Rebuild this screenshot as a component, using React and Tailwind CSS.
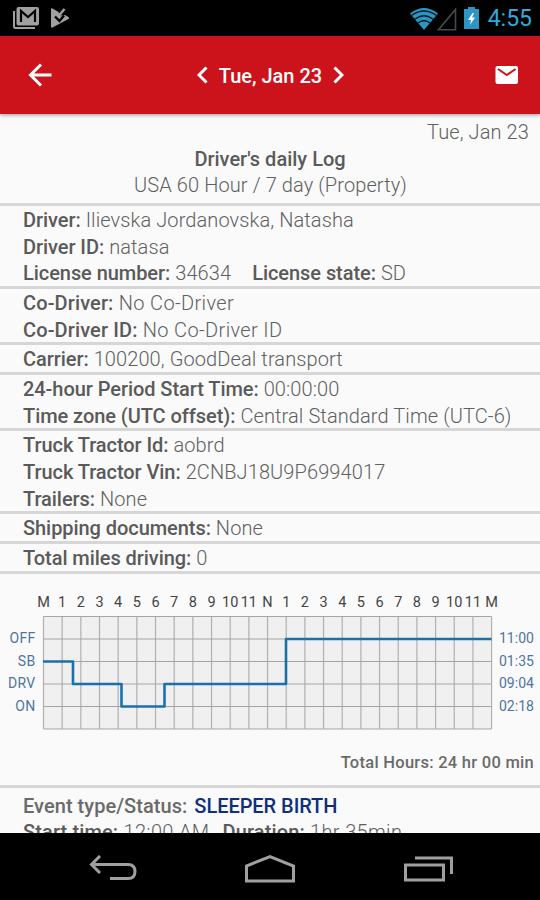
import React, { useState } from "react";

const HOURS = ["M", "1", "2", "3", "4", "5", "6", "7", "8", "9", "10", "11", "N", "1", "2", "3", "4", "5", "6", "7", "8", "9", "10", "11", "M"];

const STATUSES = [
  { name: "OFF", total: "11:00" },
  { name: "SB", total: "01:35" },
  { name: "DRV", total: "09:04" },
  { name: "ON", total: "02:18" },
];

const SECTIONS = [
  [
    [{ label: "Driver:", value: "Ilievska Jordanovska, Natasha" }],
    [{ label: "Driver ID:", value: "natasa" }],
    [
      { label: "License number:", value: "34634" },
      { label: "License state:", value: "SD" },
    ],
  ],
  [
    [{ label: "Co-Driver:", value: "No Co-Driver", wide: true }],
    [{ label: "Co-Driver ID:", value: "No Co-Driver ID", wide: true }],
  ],
  [[{ label: "Carrier:", value: "100200, GoodDeal transport" }]],
  [
    [{ label: "24-hour Period Start Time:", value: "00:00:00" }],
    [{ label: "Time zone (UTC offset):", value: "Central Standard Time (UTC-6)" }],
  ],
  [
    [{ label: "Truck Tractor Id:", value: "aobrd" }],
    [{ label: "Truck Tractor Vin:", value: "2CNBJ18U9P6994017" }],
    [{ label: "Trailers:", value: "None" }],
  ],
  [[{ label: "Shipping documents:", value: "None" }]],
  [[{ label: "Total miles driving:", value: "0" }]],
];

// Android status bar
const StatusBar = () => (
  <div className="flex h-9 shrink-0 items-center justify-between bg-black pl-[12px] pr-[8px]">
    <div className="flex items-center gap-[10px]">
      <svg width="28" height="24" viewBox="0 0 28 24">
        <path d="M2 5v15.500q0 1.500 1.500 1.500H23" fill="none" stroke="#a0a0a0" strokeWidth="2" />
        <rect x="4.500" y="1" width="22.500" height="18.500" rx="2" fill="#a0a0a0" />
        <path d="M9 16V5l7 6 7-6v11" fill="none" stroke="#000" strokeWidth="2.200" />
      </svg>
      <svg width="20" height="24" viewBox="0 0 20 24">
        <path d="M1 3.500Q1 1.500 2.500 2.500L8.500 6 10 9.500 15 9 18.500 11q1.500 1 0 2L2.500 21.500Q1 22 1 20.500z" fill="#a0a0a0" />
        <path d="M5 10.500l4.500 4.500 4.500-5.500" fill="none" stroke="#000" strokeWidth="2.400" />
        <path d="M9 9.500l5.500-6.500" fill="none" stroke="#a0a0a0" strokeWidth="2.500" />
      </svg>
    </div>
    <div className="flex items-center">
      <svg width="47" height="26" viewBox="0 0 47 26" className="mt-px">
        <path d="M0 7.500Q14 -3.500 28 7.500L14 24z" fill="#2d94c4" />
        <path d="M1.500 9.500Q14 0.500 26.500 9.500M4.500 13.500Q14 6 23.500 13.500M8 17Q14 12.500 20 17" fill="none" stroke="#05202c" strokeWidth="1.300" />
        <path d="M45.500 3.500V23.800H28.500z" fill="none" stroke="#4a4a4a" strokeWidth="1.600" />
      </svg>
      <svg width="15" height="24" viewBox="0 0 15 24" className="ml-[7px] mr-[9px]">
        <path d="M0 3h4V1h7v2h4v20H0z" fill="#2d94c4" />
        <path d="M8.500 7L4 14h3l-1 5 5-7.500H8L10 7z" fill="#fff" />
      </svg>
      <span className="pt-[2px] text-[23px] leading-9 text-[#33a9d8]">4:55</span>
    </div>
  </div>
);

const AppBar = ({ date }) => (
  <header className="relative z-10 flex h-[78px] shrink-0 items-center justify-between bg-[#cc121b] pl-[28px] pr-[21px] text-white shadow-[0_1px_4px_rgba(0,0,0,0.4)]">
    <button aria-label="Back">
      <svg width="24" height="24" viewBox="0 0 24 24" fill="none" stroke="currentColor" strokeWidth="3">
        <path d="M23.500 12H2.500M13 1.500L2.500 12 13 22.500" />
      </svg>
    </button>
    <div className="flex items-center gap-[11px] pr-[6px]">
      <button aria-label="Previous day">
        <svg width="11" height="18" viewBox="0 0 11 18" fill="none" stroke="currentColor" strokeWidth="3">
          <path d="M9.500 1.500L2 9l7.500 7.500" />
        </svg>
      </button>
      <span className="pt-[2px] text-[20px] font-medium leading-6">{date}</span>
      <button aria-label="Next day">
        <svg width="11" height="18" viewBox="0 0 11 18" fill="none" stroke="currentColor" strokeWidth="3">
          <path d="M1.500 1.500L9 9l-7.500 7.500" />
        </svg>
      </button>
    </div>
    <button aria-label="Send by mail">
      <svg width="24" height="20" viewBox="0 0 24 20">
        <rect x="0.500" y="1" width="22.500" height="18" rx="2" fill="#fff" />
        <path d="M3 4l8.800 6 8.800-6" fill="none" stroke="#cc121b" strokeWidth="2" />
      </svg>
    </button>
  </header>
);

const Field = ({ label, value, wide }) => (
  <span className={wide ? "whitespace-pre tracking-[0.350px]" : "whitespace-pre"}>
    <span className={wide ? "font-medium tracking-[0.120px] text-[#5a5a5a]" : "font-medium tracking-[-0.060px] text-[#5a5a5a]"}>
      {label}
    </span>{" "}
    {value}
  </span>
);

const DutyChart = () => {
  const left = 43.5;
  const top = 36.5;
  const stepX = 18.67;
  const stepY = 22.5;
  const right = left + stepX * 24;
  const bottom = top + stepY * 5;

  return (
    <svg width="540" height="160" viewBox="0 0 540 160" className="block font-normal tracking-normal">
      <rect x={left} y={top} width={right - left} height={bottom - top} fill="#f0f0f0" />
      {HOURS.map((hour, i) => (
        <g key={i}>
          <line x1={left + i * stepX} y1={top} x2={left + i * stepX} y2={bottom} stroke="#b0b0b0" strokeWidth="1.200" />
          <text x={left + i * stepX} y="27" textAnchor="middle" fontSize="14.500" fill="#444">
            {hour}
          </text>
        </g>
      ))}
      {[0, 1, 2, 3, 4, 5].map((i) => (
        <line key={i} x1={left} y1={top + i * stepY} x2={right} y2={top + i * stepY} stroke="#a5a5a5" strokeWidth="1" />
      ))}
      {STATUSES.map((status, i) => (
        <g key={status.name} fontSize="14" fill="#4f75a0">
          <text x="35.500" y={top + (i + 1) * stepY + 4} textAnchor="end" letterSpacing="0.300">
            {status.name}
          </text>
          <text x="499" y={top + (i + 1) * stepY + 4}>
            {status.total}
          </text>
        </g>
      ))}
      <path
        d="M43 81.500H73V104H121.500V126.500H164.500V104H286V59H491.500"
        fill="none"
        stroke="#1b70aa"
        strokeWidth="2.600"
        strokeLinejoin="round"
      />
    </svg>
  );
};

// Android soft keys
const NavBar = () => (
  <nav className="flex h-[67px] shrink-0 items-center justify-between bg-black px-[87px] pt-[4px]">
    <svg width="50" height="28" viewBox="0 0 50 28" fill="none" stroke="#a0a0a0" strokeWidth="3">
      <path d="M13 1L4.500 9.500 13 18M4.500 9.500H41q7 0 7 7t-7 7H23" />
    </svg>
    <svg width="54" height="30" viewBox="0 0 54 30" fill="none" stroke="#a0a0a0" strokeWidth="3">
      <path d="M3.500 27V12L27 2.500 50.500 12V27z" />
    </svg>
    <svg width="50" height="28" viewBox="0 0 50 28" fill="none" stroke="#a0a0a0" strokeWidth="3">
      <path d="M2.500 10H40.500V25H2.500zM12 3H48.500V19" />
    </svg>
  </nav>
);

const App = () => {
  const [date] = useState("Tue, Jan 23");

  return (
    <div className="flex h-[900px] w-[540px] flex-col overflow-hidden bg-[#fafafa] font-['Roboto',sans-serif]">
      <StatusBar />
      <AppBar date={date} />

      <main className="min-h-0 flex-1 overflow-hidden text-[20px] font-light leading-[26.650px] tracking-[0.100px] text-[#606060]">
        {/* Title */}
        <div className="h-[89px] pt-[5px]">
          <p className="pr-[11px] text-right">{date}</p>
          <h1 className="text-center font-medium tracking-normal text-[#5a5a5a]">Driver's daily Log</h1>
          <p className="pl-px text-center">USA 60 Hour / 7 day (Property)</p>
        </div>

        {/* Log details */}
        {SECTIONS.map((rows, i) => (
          <section key={i} className="border-t-[3px] border-[#d6d6d6] pl-[23px]">
            {rows.map((fields, j) => (
              <div key={j} className="relative top-px flex gap-[21px]">
                {fields.map((field) => (
                  <Field key={field.label} {...field} />
                ))}
              </div>
            ))}
          </section>
        ))}

        {/* Hours chart */}
        <section className="h-[214px] border-t-[3px] border-[#d6d6d6] pt-[6px]">
          <DutyChart />
          <p className="pr-[6px] pt-[11px] text-right text-[16.500px] font-medium leading-6 tracking-[0.270px] text-[#6a6a6a]">
            Total Hours: 24 hr 00 min
          </p>
        </section>

        {/* Events */}
        <section className="border-t-[3px] border-[#d6d6d6] pl-[23px] pt-[5px]">
          <div className="flex gap-[7px]">
            <span className="font-medium tracking-[0.050px] text-[#6a6a6a]">Event type/Status:</span>
            <span className="font-medium tracking-[-0.050px] text-[#0d2f7e]">SLEEPER BIRTH</span>
          </div>
          <div className="flex gap-[13px]">
            <Field label="Start time:" value="12:00 AM" wide />
            <Field label="Duration:" value="1hr 35min" wide />
          </div>
        </section>
      </main>

      <NavBar />
    </div>
  );
};

export default App;
